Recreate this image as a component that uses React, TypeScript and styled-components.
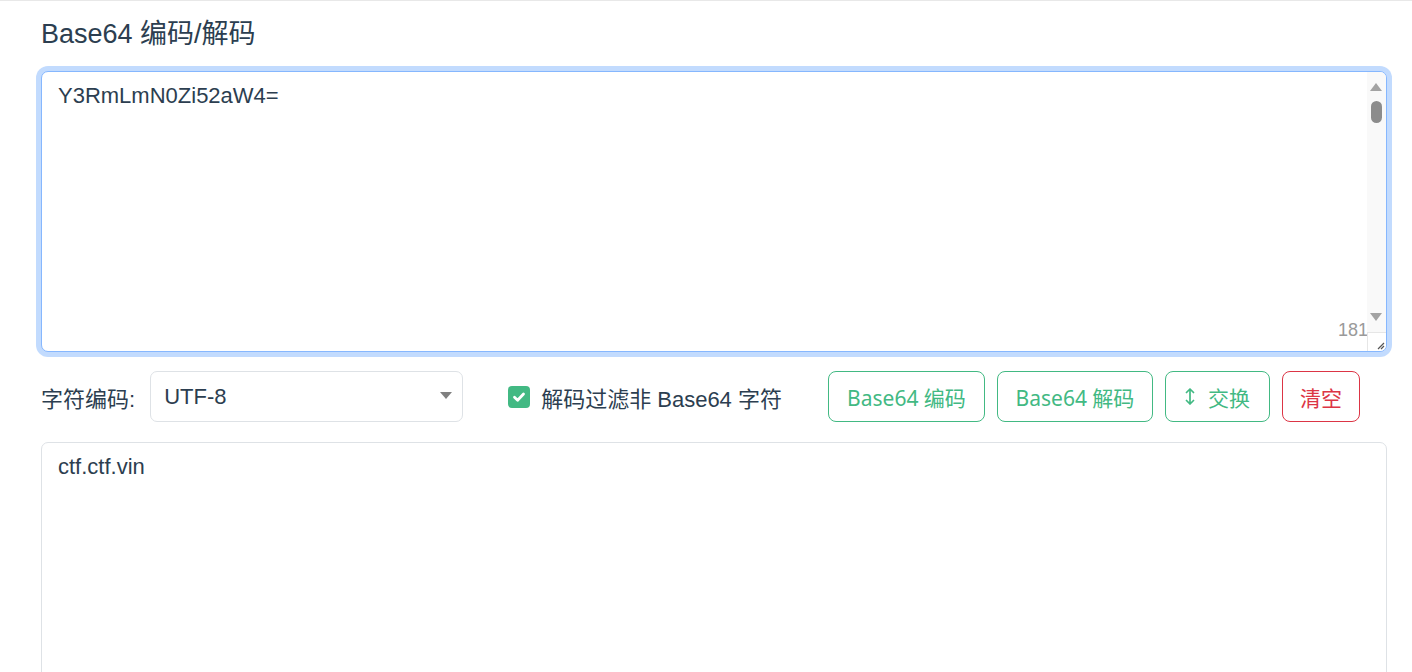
import React from "react";
import styled, { createGlobalStyle } from "styled-components";

const GlobalStyle = createGlobalStyle`
  html, body { margin: 0; padding: 0; background: #fff; overflow: hidden; }
  body { font-family: "Liberation Sans", Arial, "Noto Sans CJK SC", sans-serif; color: #2c3e50; }
  * { box-sizing: border-box; }
`;

const GREEN = "#42b983";
const RED = "#dc3545";

const Page = styled.div`
  border-top: 1px solid #e8e8e8;
  padding: 16px 25px 0 41px;
  width: 1412px;
  height: 672px;
`;

const Title = styled.h3`
  margin: 0 0 20px;
  font-size: 27px;
  line-height: 34px;
  font-weight: 400;
  color: #2c3e50;
`;

const EditorWrap = styled.div`
  position: relative;
  height: 281px;
`;

const TextBox = styled.textarea<{ $focused?: boolean; $height: number }>`
  display: block;
  width: 100%;
  height: ${(p) => p.$height}px;
  margin: 0;
  padding: 7px 16px;
  font-family: "Liberation Sans", Arial, "Noto Sans CJK SC", sans-serif;
  font-size: 22px;
  line-height: 33px;
  color: #2c3e50;
  background: #fff;
  border: 1px solid ${(p) => (p.$focused ? "#86b7fe" : "#dee2e6")};
  border-radius: 7px;
  box-shadow: ${(p) => (p.$focused ? "0 0 0 5px rgba(13,110,253,0.25)" : "none")};
  outline: none;
  resize: none;
  overflow: hidden;
`;

const ScrollTrack = styled.div`
  position: absolute;
  top: 1px;
  right: 1px;
  width: 19px;
  height: 260px;
  background: #f9f9f9;
  border-top-right-radius: 6px;
`;

const Arrow = styled.div<{ $dir: "up" | "down"; $top: number }>`
  position: absolute;
  left: 3px;
  top: ${(p) => p.$top}px;
  width: 0;
  height: 0;
  border-left: 6.5px solid transparent;
  border-right: 6.5px solid transparent;
  ${(p) =>
    p.$dir === "up"
      ? "border-bottom: 8px solid #a3a3a3;"
      : "border-top: 8px solid #a3a3a3;"}
`;

const Thumb = styled.div`
  position: absolute;
  left: 4px;
  top: 29px;
  width: 11px;
  height: 22px;
  border-radius: 6px;
  background: #8c8c8c;
`;

const Resizer = styled.div`
  position: absolute;
  right: 1px;
  bottom: 1px;
  width: 19px;
  height: 19px;
  border-top: 1px solid #e6e6e6;
  border-left: 1px solid #e6e6e6;
  background: #fff;
  border-bottom-right-radius: 6px;
  display: flex;
  align-items: flex-end;
  justify-content: flex-end;
`;

const Counter = styled.span`
  position: absolute;
  right: 19px;
  bottom: 13px;
  font-size: 18px;
  line-height: 18px;
  color: #9a9a9a;
`;

const Controls = styled.div`
  display: flex;
  align-items: center;
  height: 51px;
  margin: 19px 0 20px;
`;

const FieldLabel = styled.span`
  font-size: 22px;
  color: #2c3e50;
`;

const SelectWrap = styled.div`
  position: relative;
  margin-left: 15px;
  width: 313px;
  height: 51px;
`;

const Select = styled.select`
  appearance: none;
  width: 100%;
  height: 100%;
  padding: 0 40px 0 13px;
  font-family: "Liberation Sans", Arial, "Noto Sans CJK SC", sans-serif;
  font-size: 22px;
  color: #2c3e50;
  background: #fff;
  border: 1px solid #dee2e6;
  border-radius: 7px;
  outline: none;
`;

const Caret = styled.svg`
  position: absolute;
  right: 11px;
  top: 21px;
  pointer-events: none;
`;

const CheckLabel = styled.label`
  display: flex;
  align-items: center;
  gap: 11px;
  margin-left: 45px;
  font-size: 22px;
  color: #2c3e50;
`;

const CheckBox = styled.span`
  display: inline-flex;
  align-items: center;
  justify-content: center;
  width: 22px;
  height: 22px;
  border-radius: 4px;
  background: ${GREEN};
`;

const Buttons = styled.div`
  display: flex;
  gap: 12px;
  margin-left: 46px;
`;

const ActionButton = styled.button<{ $color: string; $width: number }>`
  display: inline-flex;
  align-items: center;
  justify-content: center;
  gap: 13px;
  width: ${(p) => p.$width}px;
  height: 51px;
  padding: 0;
  font-family: "Noto Sans", "Noto Sans CJK SC", sans-serif;
  font-size: 21px;
  color: ${(p) => p.$color};
  background: #fff;
  border: 1px solid ${(p) => p.$color};
  border-radius: 8px;
  cursor: pointer;
`;

export default function App() {
  return (
    <>
      <GlobalStyle />
      <Page>
        <Title>Base64 编码/解码</Title>
        <EditorWrap>
          <TextBox $focused $height={281} defaultValue="Y3RmLmN0Zi52aW4=" spellCheck={false} />
          <ScrollTrack>
            <Arrow $dir="up" $top={11} />
            <Thumb />
            <Arrow $dir="down" $top={241} />
          </ScrollTrack>
          <Counter>181</Counter>
          <Resizer>
            <svg width="12" height="12" viewBox="0 0 12 12">
              <path d="M4 10 L10 4 M7 10 L10 7" stroke="#555" strokeWidth="1.2" fill="none" />
            </svg>
          </Resizer>
        </EditorWrap>
        <Controls>
          <FieldLabel>字符编码:</FieldLabel>
          <SelectWrap>
            <Select defaultValue="UTF-8">
              <option>UTF-8</option>
              <option>GBK</option>
            </Select>
            <Caret width="12" height="8" viewBox="0 0 12 8">
              <path d="M0 0 H12 L6 7 Z" fill="#808080" />
            </Caret>
          </SelectWrap>
          <CheckLabel>
            <CheckBox>
              <svg width="16" height="16" viewBox="0 0 16 16">
                <path d="M3.5 8.3 L6.6 11.2 L12.5 5" stroke="#fff" strokeWidth="2.8" fill="none" strokeLinecap="round" strokeLinejoin="round" />
              </svg>
            </CheckBox>
            解码过滤非 Base64 字符
          </CheckLabel>
          <Buttons>
            <ActionButton $color={GREEN} $width={157}>Base64 编码</ActionButton>
            <ActionButton $color={GREEN} $width={156}>Base64 解码</ActionButton>
            <ActionButton $color={GREEN} $width={105}>
              <svg width="10" height="17" viewBox="0 0 10 17">
                <path d="M5 1 V16 M1.5 4.5 L5 1 L8.5 4.5 M1.5 12.5 L5 16 L8.5 12.5" stroke={GREEN} strokeWidth="1.7" fill="none" strokeLinecap="round" strokeLinejoin="round" />
              </svg>
              交换
            </ActionButton>
            <ActionButton $color={RED} $width={78}>清空</ActionButton>
          </Buttons>
        </Controls>
        <TextBox $height={300} defaultValue="ctf.ctf.vin" readOnly spellCheck={false} />
      </Page>
    </>
  );
}
